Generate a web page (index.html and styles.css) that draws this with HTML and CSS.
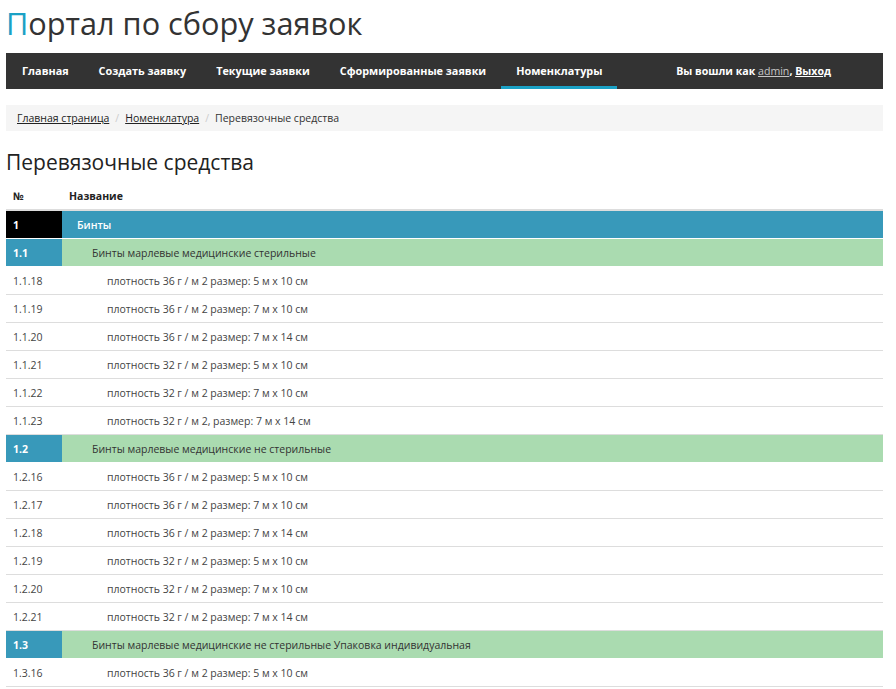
FILE: index.html
```html
<!DOCTYPE html>
<html lang="ru">
<head>
    <meta charset="UTF-8">
    <title>Портал по сбору заявок</title>
    <link rel="stylesheet" href="styles.css">
</head>
<body>
    <div class="container">
        <h1 class="logo"><span class="first">П</span>ортал по сбору заявок</h1>

        <div class="navbar">
            <ul class="nav">
                <li><a href="#">Главная</a></li>
                <li><a href="#">Создать заявку</a></li>
                <li><a href="#">Текущие заявки</a></li>
                <li><a href="#">Сформированные заявки</a></li>
                <li class="active"><a href="#">Номенклатуры</a></li>
            </ul>
            <div class="user">Вы вошли как <a href="#" class="username">admin</a>, <a href="#">Выход</a></div>
        </div>

        <ol class="breadcrumb">
            <li><a href="#">Главная страница</a></li>
            <li><a href="#">Номенклатура</a></li>
            <li>Перевязочные средства</li>
        </ol>

        <h2>Перевязочные средства</h2>

        <table class="table">
            <thead>
                <tr><th class="num">№</th><th>Название</th></tr>
            </thead>
            <tbody>
                <tr class="level-1"><td class="num">1</td><td>Бинты</td></tr>
                <tr class="level-2"><td class="num">1.1</td><td>Бинты марлевые медицинские стерильные</td></tr>
                <tr class="level-3"><td class="num">1.1.18</td><td>плотность 36 г / м 2 размер: 5 м х 10 см</td></tr>
                <tr class="level-3"><td class="num">1.1.19</td><td>плотность 36 г / м 2 размер: 7 м х 10 см</td></tr>
                <tr class="level-3"><td class="num">1.1.20</td><td>плотность 36 г / м 2 размер: 7 м х 14 см</td></tr>
                <tr class="level-3"><td class="num">1.1.21</td><td>плотность 32 г / м 2 размер: 5 м х 10 см</td></tr>
                <tr class="level-3"><td class="num">1.1.22</td><td>плотность 32 г / м 2 размер: 7 м х 10 см</td></tr>
                <tr class="level-3"><td class="num">1.1.23</td><td>плотность 32 г / м 2, размер: 7 м х 14 см</td></tr>
                <tr class="level-2"><td class="num">1.2</td><td>Бинты марлевые медицинские не стерильные</td></tr>
                <tr class="level-3"><td class="num">1.2.16</td><td>плотность 36 г / м 2 размер: 5 м х 10 см</td></tr>
                <tr class="level-3"><td class="num">1.2.17</td><td>плотность 36 г / м 2 размер: 7 м х 10 см</td></tr>
                <tr class="level-3"><td class="num">1.2.18</td><td>плотность 36 г / м 2 размер: 7 м х 14 см</td></tr>
                <tr class="level-3"><td class="num">1.2.19</td><td>плотность 32 г / м 2 размер: 5 м х 10 см</td></tr>
                <tr class="level-3"><td class="num">1.2.20</td><td>плотность 32 г / м 2 размер: 7 м х 10 см</td></tr>
                <tr class="level-3"><td class="num">1.2.21</td><td>плотность 32 г / м 2 размер: 7 м х 14 см</td></tr>
                <tr class="level-2"><td class="num">1.3</td><td>Бинты марлевые медицинские не стерильные Упаковка индивидуальная</td></tr>
                <tr class="level-3"><td class="num">1.3.16</td><td>плотность 36 г / м 2 размер: 5 м х 10 см</td></tr>
            </tbody>
        </table>
    </div>
</body>
</html>
```

FILE: styles.css
```css
body {
    margin: 0;
    font-family: "Open Sans", Arial, sans-serif;
    font-size: 10.5px;
    color: #333;
    background: #fff;
}
a {
    color: inherit;
}
.container {
    width: 877px;
    margin-left: 6px;
}
.logo {
    margin: 0;
    height: 53px;
    line-height: 46px;
    font-size: 30.7px;
    font-weight: normal;
    color: #333;
}
.logo .first {
    color: #1ba1c5;
}
.navbar {
    display: flex;
    align-items: stretch;
    height: 36px;
    background: #333;
    color: #fff;
}
.nav {
    display: flex;
    list-style: none;
    margin: 0;
    padding: 0 0 0 1px;
}
.nav li a {
    display: block;
    height: 36px;
    line-height: 36px;
    padding: 0 15px;
    font-size: 10.85px;
    font-weight: bold;
    color: #fff;
    text-decoration: none;
    box-sizing: border-box;
}
.nav li.active a {
    border-bottom: 3px solid #1ba1c5;
}
.user {
    margin-left: auto;
    line-height: 36px;
    padding-right: 52px;
    font-size: 10.6px;
    font-weight: bold;
}
.user a {
    color: #fff;
}
.user .username {
    color: #c6c6c6;
    font-weight: normal;
}
.breadcrumb {
    display: flex;
    list-style: none;
    margin: 16px 0 0;
    padding: 0 11px;
    height: 26px;
    line-height: 26px;
    background: #f5f5f5;
    color: #333;
}
.breadcrumb li + li:before {
    content: "/";
    color: #ccc;
    padding: 0 6px;
}
.breadcrumb a {
    color: #222;
}
h2 {
    margin: 16px 0 0;
    height: 35px;
    line-height: 30px;
    font-size: 21px;
    font-weight: normal;
    color: #222;
}
.table {
    width: 100%;
    border-collapse: collapse;
}
.table th {
    text-align: left;
    padding: 0 7px;
    height: 27px;
    font-weight: bold;
    color: #222;
    border-bottom: 2px solid #ddd;
    vertical-align: middle;
}
.table td {
    height: 27px;
    padding: 0 7px;
    border-bottom: 1px solid #ddd;
    color: #444;
    vertical-align: middle;
}
.table .num {
    width: 42px;
}
.level-1 td {
    background: #3899ba;
    color: #fff;
    padding-left: 15px;
    font-weight: 600;
}
.level-1 td.num {
    background: #000;
    padding-left: 7px;
    font-weight: bold;
}
.level-2 td {
    background: #aadbb0;
    color: #333;
    padding-left: 30px;
}
.level-2 td.num {
    background: #3899ba;
    color: #fff;
    padding-left: 7px;
    font-weight: bold;
}
.level-3 td {
    padding-left: 45px;
}
.level-3 td.num {
    padding-left: 7px;
}
.level-1 td, .level-2 td {
    border-bottom: 1px solid #fff;
}
```
